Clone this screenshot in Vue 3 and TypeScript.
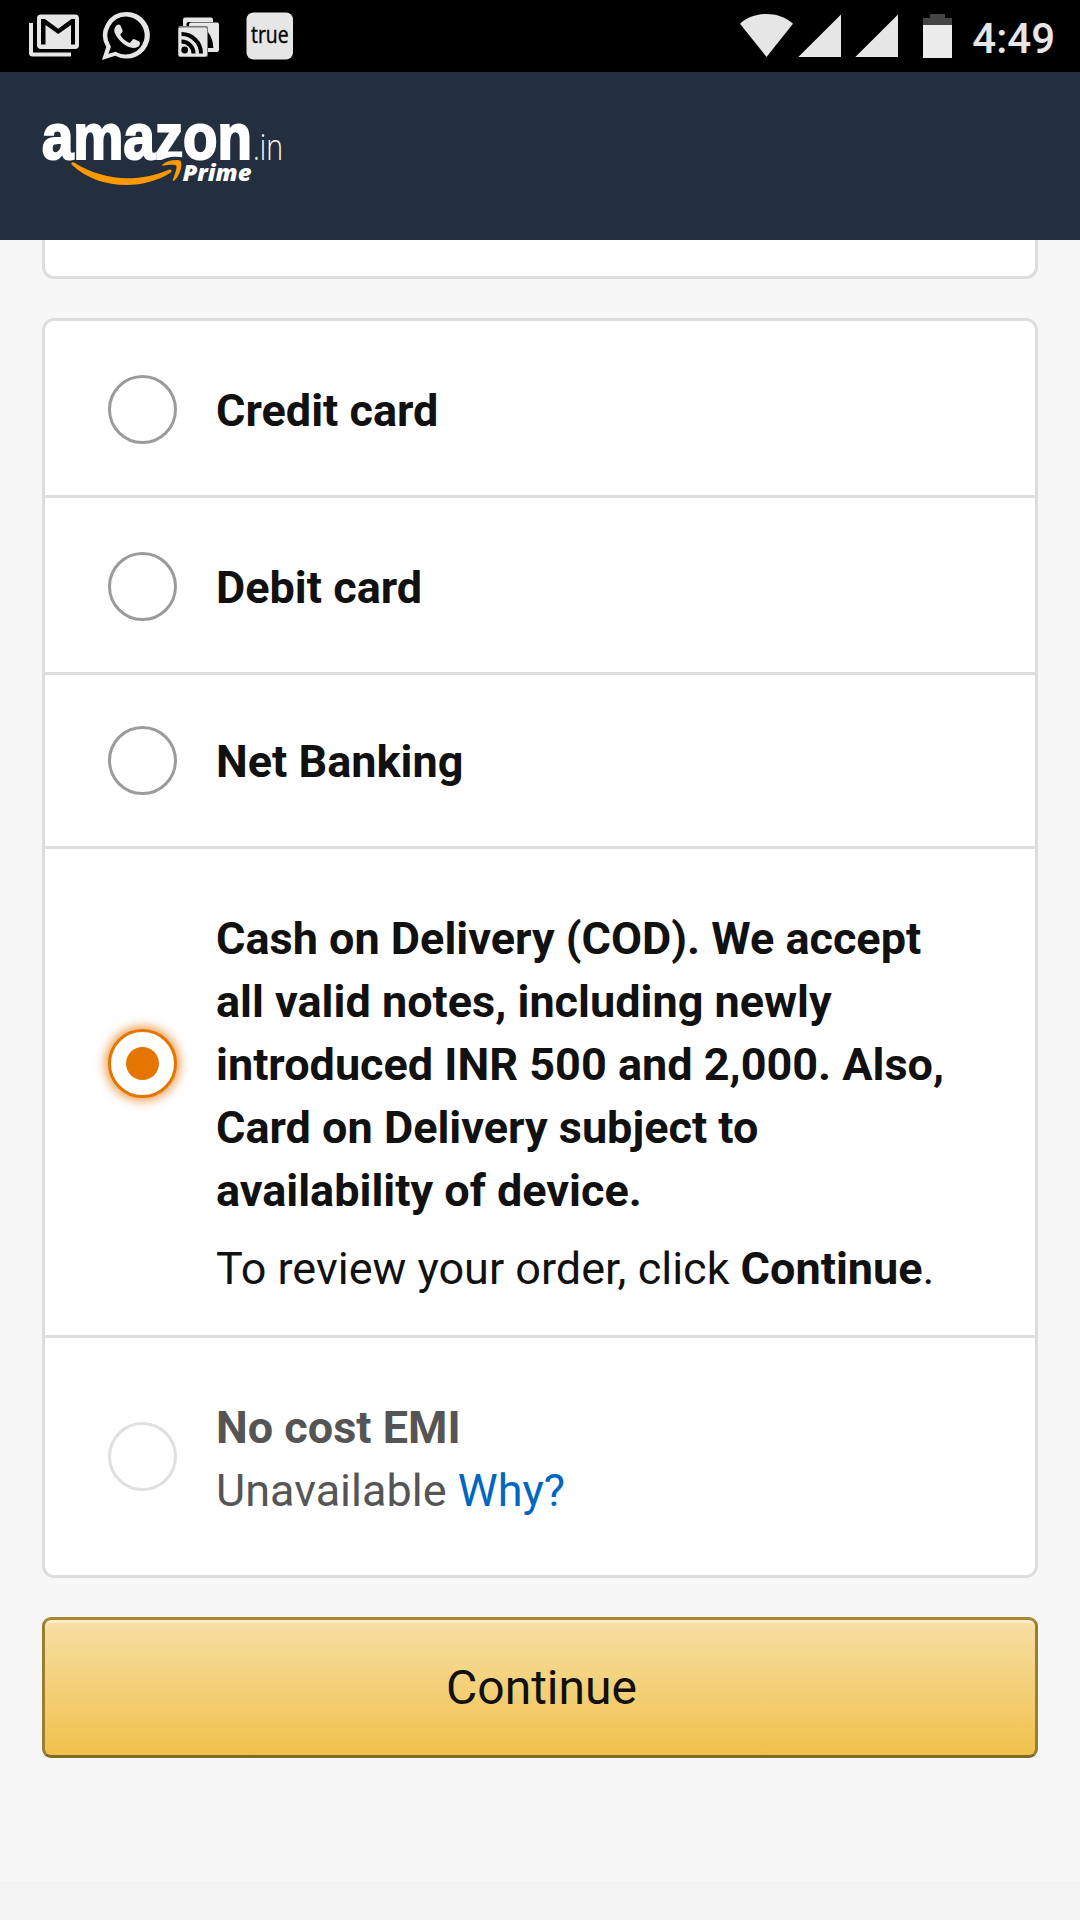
<script setup lang="ts">
interface PaymentOption {
  id: string
  label: string
  state: 'idle' | 'selected' | 'disabled'
}

const options: PaymentOption[] = [
  { id: 'credit', label: 'Credit card', state: 'idle' },
  { id: 'debit', label: 'Debit card', state: 'idle' },
  { id: 'net', label: 'Net Banking', state: 'idle' },
  {
    id: 'cod',
    label:
      'Cash on Delivery (COD). We accept all valid notes, including newly introduced INR 500 and 2,000. Also, Card on Delivery subject to availability of device.',
    state: 'selected',
  },
  { id: 'emi', label: 'No cost EMI', state: 'disabled' },
]
</script>

<template>
  <div class="screen">
    <div class="status">
      <div class="notifications">
        <svg width="50" height="43" viewBox="0 0 50 43">
          <path d="M0 9h4v29.500h38v4H3.500a3.500 3.500 0 0 1-3.500-3.500z" fill="#e6e6e6" />
          <rect x="8" y="0.500" width="42" height="34.500" rx="4" fill="#e6e6e6" />
          <path d="M12 30.500V5h4l13.200 9.800L42.400 5H46v25.500h-4V11l-12.800 9L16.500 11v19.500z" fill="#000" />
        </svg>
        <svg class="whatsapp" width="48" height="48" viewBox="0 0 48 48">
          <path
            fill="#e6e6e6"
            fill-rule="evenodd"
            d="M24.500 0a23.300 23.300 0 1 1-11.200 43.700L0 48l4.200-12.900A23.300 23.300 0 0 1 24.500 0zM24.500 4.500A19 19 0 0 0 8.300 33.500l.7 1.200-2.600 7 7.400-2 1.200.7A19 19 0 1 0 24.500 4.500z"
          />
          <path
            fill="#e6e6e6"
            d="M14.700 13.300c1.200-1.200 3-1.200 3.800.2l2 4.700c.4 1-.1 1.800-1.800 3.800-.5.700-.3 1 .2 1.800 2 3.200 4.300 5.200 7.800 6.800.8.400 1.200.3 1.800-.3l2.200-2.700c.6-.7 1-.7 1.800-.4l4.700 2.300c1.200.6.900 2.400.2 3.700-1 1.800-3.400 2.800-5.600 2.800-3.800-.2-9.300-2.800-12.300-5.800-3-2.900-6.500-7.200-7.200-10.900-.3-2.400.8-4.400 2.400-6z"
          />
        </svg>
        <svg class="feed" width="41" height="40" viewBox="0 0 41 40">
          <rect x="5" y="0.500" width="30" height="26" rx="2" fill="#e6e6e6" />
          <rect x="8.500" y="5" width="34" height="32" rx="2" fill="#000" />
          <rect x="11" y="5.500" width="30" height="29.500" rx="2" fill="#e6e6e6" />
          <path d="M29 14c3.500 4 6 9 6.300 17H29z" fill="#000" />
          <rect x="0" y="9" width="30" height="31" rx="2" fill="#777" />
          <rect x="0.500" y="10.500" width="28.500" height="29" rx="2" fill="#e6e6e6" />
          <circle cx="6.700" cy="33" r="3.400" fill="#000" />
          <path d="M3.500 24.500A12 12 0 0 1 15.500 36.500M3.500 17A19.500 19.500 0 0 1 23 36.500" fill="none" stroke="#000" stroke-width="4" />
        </svg>
        <svg class="caller" width="48" height="48" viewBox="0 0 48 48">
          <rect x="0.500" y="0.500" width="46.500" height="47" rx="7" fill="#e6e6e6" />
          <text x="5" y="30.500" textLength="37.500" lengthAdjust="spacingAndGlyphs" class="caller-text">true</text>
        </svg>
      </div>
      <div class="system">
        <svg width="158" height="43" viewBox="0 0 158 43" fill="#e6e6e6">
          <path d="M0 9.700C14-3.200 39-3.200 53 9.700L26.500 43z" />
          <path d="M58.300 43H101V0.500zM115.300 43H158V0.500z" />
        </svg>
        <svg class="battery" width="29" height="44" viewBox="0 0 29 44">
          <path d="M0 4h7V0h15v4h7v8H0z" fill="#444" />
          <path d="M0 11h29v33H0z" fill="#ececec" />
        </svg>
        <span class="clock">4:49</span>
      </div>
    </div>

    <header class="header">
      <svg width="250" height="90" viewBox="0 -20 250 90">
        <text x="0" y="42" textLength="210" lengthAdjust="spacingAndGlyphs" class="brand">amazon</text>
        <text x="211" y="42.500" textLength="30" lengthAdjust="spacingAndGlyphs" class="domain">.in</text>
        <path d="M117 45c7-6 20-6.500 29.500-3v5H117z" fill="#232f3e" />
        <path
          fill="#ff9900"
          d="M29.500 46c.6-1 1.500-.9 2.500-.4 30 18.500 63 20.500 95 7.200 2-.8 3.500 1.300 1.700 2.700C101 73.500 57 73 30 48c-.7-.6-.9-1.300-.5-2z"
        />
        <path
          fill="#ff9900"
          d="M120 48c4.500-4.500 12.500-5.800 17.800-4.600 3.200.8 1.700 13.600-5.400 20.100-1 .8-2 .4-1.600-.7 1.500-3.900 4.700-12.300 3.400-14-1.300-1.600-8-.8-12.500-.3-1.500.2-2.500.3-1.700-.5z"
        />
        <text x="140.500" y="63.500" textLength="69" lengthAdjust="spacingAndGlyphs" class="prime">Prime</text>
      </svg>
    </header>

    <main class="content">
      <div class="card previous"></div>
      <section class="card">
        <div v-for="option in options" :key="option.id" class="row" :class="[option.id, option.state]">
          <span class="radio"><span v-if="option.state === 'selected'" class="dot"></span></span>
          <div class="copy">
            <div class="label">{{ option.label }}</div>
            <div v-if="option.id === 'cod'" class="hint">To review your order, click <b>Continue</b>.</div>
            <div v-if="option.id === 'emi'">Unavailable <a class="link">Why?</a></div>
          </div>
        </div>
      </section>
      <button class="continue" type="button">Continue</button>
    </main>
    <footer class="footer"></footer>
  </div>
</template>

<style>
body {
  margin: 0;
}
</style>

<style scoped>
.screen {
  width: 1080px;
  height: 1920px;
  display: flex;
  flex-direction: column;
  overflow: hidden;
  background: #f7f7f7;
  color: #111;
  font-family: Roboto, sans-serif;
  font-size: 45px;
  line-height: 63px;
}
svg {
  display: block;
  flex: none;
}
.status {
  height: 72px;
  flex: none;
  box-sizing: border-box;
  background: #000;
  display: flex;
  justify-content: space-between;
  padding: 0 25px 0 29px;
}
.notifications,
.system {
  display: flex;
  align-items: flex-start;
  padding-top: 14px;
}
.notifications {
  padding-top: 12px;
}
.notifications svg:first-child {
  margin-top: 2px;
}
.whatsapp {
  margin-left: 23px;
}
.feed {
  margin: 5px 0 0 28px;
}
.caller {
  margin-left: 27px;
}
.caller-text {
  font: 500 23px 'Open Sans', sans-serif;
  fill: #000;
  stroke: #000;
  stroke-width: 0.4px;
}
.battery {
  margin-left: 25px;
}
.clock {
  margin-left: 20px;
  color: #e6e6e6;
  font-size: 42px;
  font-weight: 500;
  line-height: 50px;
}
.header {
  height: 168px;
  flex: none;
  box-sizing: border-box;
  background: #232f3e;
  padding: 25px 42px 0;
}
.brand {
  font: 700 64px 'Liberation Sans', sans-serif;
  fill: #fff;
  stroke: #fff;
  stroke-width: 2.2px;
}
.domain {
  font: 300 36px 'Open Sans', sans-serif;
  fill: #fff;
}
.prime {
  font: italic 800 23px 'Open Sans', sans-serif;
  fill: #fff;
}
.content {
  flex: 1;
  display: flex;
  flex-direction: column;
  padding: 0 42px;
}
.card {
  background: #fff;
  border: 3px solid #ddd;
  border-radius: 12px;
}
.previous {
  height: 36px;
  border-top: 0;
  border-radius: 0 0 12px 12px;
  margin-bottom: 39px;
}
.row {
  box-sizing: border-box;
  display: flex;
  align-items: flex-start;
  gap: 39px;
  height: 177px;
  padding: 58px 63px 0;
  border-bottom: 3px solid #ddd;
}
.row.net {
  height: 174px;
  padding-top: 55px;
}
.row.cod {
  height: 489px;
}
.row.emi {
  height: 237px;
  border-bottom: 0;
}
.radio {
  box-sizing: border-box;
  flex: none;
  display: flex;
  align-items: center;
  justify-content: center;
  width: 69px;
  height: 69px;
  margin-top: -4px;
  border: 3px solid #9b9b9b;
  border-radius: 50%;
  background: #fff;
}
.cod .radio {
  margin-top: 122px;
  border-color: #e47600;
  box-shadow: 0 0 11px 2px rgba(228, 121, 17, 0.85);
}
.emi .radio {
  margin-top: 26px;
  border-color: #e0e0e0;
}
.dot {
  width: 33px;
  height: 33px;
  border-radius: 50%;
  background: #e47600;
}
.copy {
  flex: 1;
}
.label,
b {
  font-weight: 700;
}
.hint {
  margin-top: 15px;
  white-space: nowrap;
}
.disabled {
  color: #555;
}
.link {
  color: #0066c0;
}
.continue {
  box-sizing: border-box;
  height: 141px;
  margin-top: 39px;
  padding: 0 0 0 3px;
  border: 3px solid;
  border-color: #a88734 #9c7e31 #846a29;
  border-radius: 9px;
  background: linear-gradient(#f7dfa5, #f0c14b);
  box-shadow: inset 0 3px 0 rgba(255, 255, 255, 0.4);
  color: #111;
  font: 48px/135px Roboto, sans-serif;
}
.footer {
  height: 39px;
  flex: none;
  background: #f3f3f3;
}
</style>
